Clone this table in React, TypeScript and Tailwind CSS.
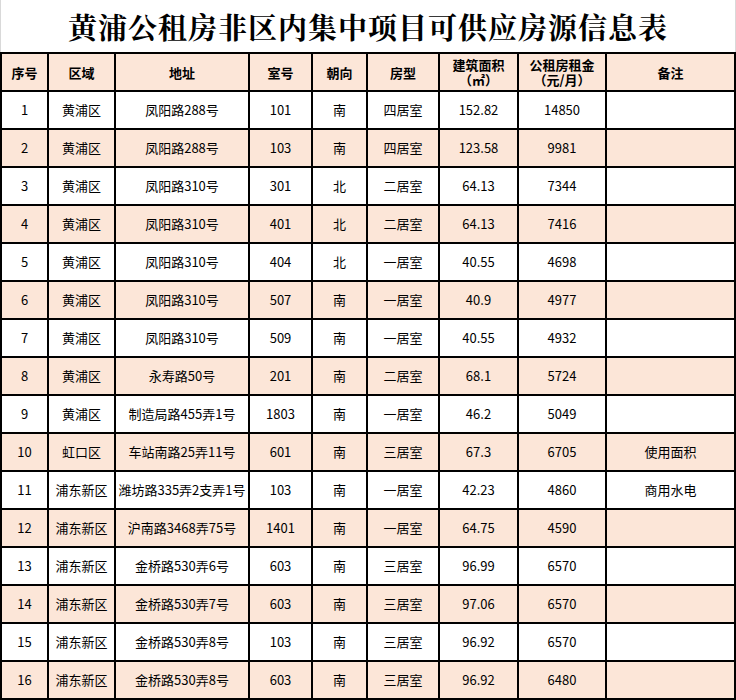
const headers = ["序号", "区域", "地址", "室号", "朝向", "房型", "建筑面积\n（㎡）", "公租房租金\n（元/月）", "备注"]

const rows = [
  ["1", "黄浦区", "凤阳路288号", "101", "南", "四居室", "152.82", "14850", ""],
  ["2", "黄浦区", "凤阳路288号", "103", "南", "四居室", "123.58", "9981", ""],
  ["3", "黄浦区", "凤阳路310号", "301", "北", "二居室", "64.13", "7344", ""],
  ["4", "黄浦区", "凤阳路310号", "401", "北", "二居室", "64.13", "7416", ""],
  ["5", "黄浦区", "凤阳路310号", "404", "北", "一居室", "40.55", "4698", ""],
  ["6", "黄浦区", "凤阳路310号", "507", "南", "一居室", "40.9", "4977", ""],
  ["7", "黄浦区", "凤阳路310号", "509", "南", "一居室", "40.55", "4932", ""],
  ["8", "黄浦区", "永寿路50号", "201", "南", "二居室", "68.1", "5724", ""],
  ["9", "黄浦区", "制造局路455弄1号", "1803", "南", "一居室", "46.2", "5049", ""],
  ["10", "虹口区", "车站南路25弄11号", "601", "南", "三居室", "67.3", "6705", "使用面积"],
  ["11", "浦东新区", "潍坊路335弄2支弄1号", "103", "南", "一居室", "42.23", "4860", "商用水电"],
  ["12", "浦东新区", "沪南路3468弄75号", "1401", "南", "一居室", "64.75", "4590", ""],
  ["13", "浦东新区", "金桥路530弄6号", "603", "南", "三居室", "96.99", "6570", ""],
  ["14", "浦东新区", "金桥路530弄7号", "603", "南", "三居室", "97.06", "6570", ""],
  ["15", "浦东新区", "金桥路530弄8号", "103", "南", "三居室", "96.92", "6570", ""],
  ["16", "浦东新区", "金桥路530弄8号", "603", "南", "三居室", "96.92", "6480", ""],
]

export default function App() {
  return (
    <div className="w-[736px] h-[700px] overflow-hidden bg-white font-['Noto_Sans_CJK_SC',sans-serif] text-black">
      {/* title */}
      <div className="h-[52px] flex items-center justify-center border-x border-[#d9d9d9]">
        <h1 className="text-[29px] font-bold tracking-[1px] leading-none font-['Noto_Serif_CJK_SC','Noto_Sans_CJK_SC',serif]">
          黄浦公租房非区内集中项目可供应房源信息表
        </h1>
      </div>

      {/* table */}
      <div className="grid grid-cols-[45px_65px_132px_61px_53px_70px_77px_86px_127px] auto-rows-[36px] gap-[2px] bg-black p-[2px]">
        {headers.map((h, i) => (
          <div
            key={"h" + i}
            className="bg-[#fce6d8] flex items-center justify-center text-center text-[13px] font-bold leading-[15px] whitespace-pre-line"
          >
            {h}
          </div>
        ))}
        {rows.map((r, i) =>
          r.map((c, j) => (
            <div
              key={i + "-" + j}
              className={
                "flex items-center justify-center text-[13px] whitespace-nowrap " +
                (i % 2 === 1 ? "bg-[#fce6d8]" : "bg-white")
              }
            >
              {c}
            </div>
          ))
        )}
      </div>
    </div>
  )
}
